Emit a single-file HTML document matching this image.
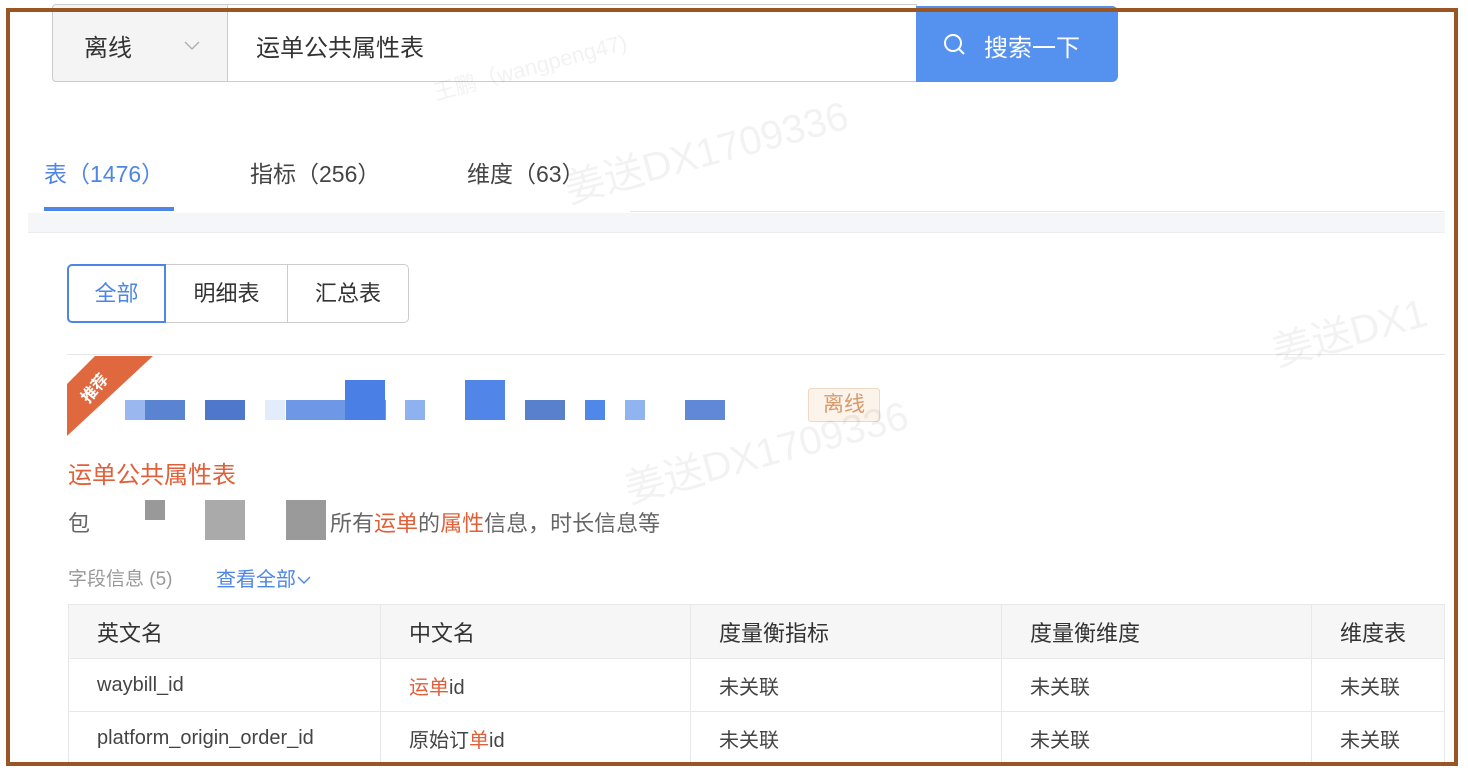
<!DOCTYPE html>
<html><head><meta charset="utf-8"><style>
*{box-sizing:border-box;margin:0;padding:0}
body{width:1468px;height:774px;background:#fff;position:relative;overflow:hidden;font-family:"Liberation Sans","Noto Sans CJK SC",sans-serif;color:#333}
.a{position:absolute}
.frame{position:absolute;left:6px;top:8px;width:1452px;height:758px;border:4px solid #9a5524;z-index:10;pointer-events:none}
.wm{position:absolute;color:rgba(0,0,0,0.05);transform:rotate(-15deg);white-space:nowrap;font-size:22px}
td,th{border:1px solid #e8e8e8;text-align:left;padding-left:28px;font-weight:normal}
</style></head><body>
<div class="frame"></div>
<div class="a" style="left:52px;top:4px;width:176px;height:78px;background:#f4f4f4;border:1px solid #ccc;border-radius:4px 0 0 4px"></div>
<div class="a" style="left:84px;top:28px;font-size:24px;color:#333">离线</div>
<svg class="a" style="left:183px;top:40px" width="18" height="12"><path d="M2 2 L9 9 L16 2" fill="none" stroke="#aaa" stroke-width="1.3"/></svg>
<div class="a" style="left:227px;top:4px;width:690px;height:78px;border:1px solid #ccc"></div>
<div class="a" style="left:256px;top:28px;font-size:24px;color:#333">运单公共属性表</div>
<div class="a" style="left:916px;top:6px;width:202px;height:76px;background:#5592ef;border-radius:0 6px 6px 0"></div>
<svg class="a" style="left:942px;top:32px" width="26" height="26"><circle cx="11" cy="11" r="8" fill="none" stroke="#fff" stroke-width="2"/><path d="M17 17 L22 22" stroke="#fff" stroke-width="2"/></svg>
<div class="a" style="left:984px;top:28px;font-size:24px;color:#fff">搜索一下</div>
<div class="a" style="left:44px;top:155px;font-size:23px;color:#4d86e8">表（1476）</div>
<div class="a" style="left:250px;top:155px;font-size:23px;color:#444">指标（256）</div>
<div class="a" style="left:467px;top:155px;font-size:23px;color:#444">维度（63）</div>
<div class="a" style="left:44px;top:207px;width:130px;height:4px;background:#4d86e8"></div>
<div class="a" style="left:630px;top:211px;width:815px;height:1px;background:#e6e6e6"></div>
<div class="a" style="left:28px;top:213px;width:1417px;height:20px;background:#f5f6f7;border-bottom:1px solid #eee"></div>
<div class="a" style="left:67px;top:264px;width:342px;height:59px;border:1px solid #ccc;border-radius:5px"></div>
<div class="a" style="left:287px;top:264px;width:1px;height:59px;background:#ccc"></div>
<div class="a" style="left:67px;top:264px;width:99px;height:59px;border:2px solid #4d86e8;border-radius:5px 0 0 5px;color:#4d86e8;font-size:22px;text-align:center;line-height:55px">全部</div>
<div class="a" style="left:166px;top:264px;width:121px;height:59px;font-size:22px;text-align:center;line-height:59px;color:#333">明细表</div>
<div class="a" style="left:287px;top:264px;width:122px;height:59px;font-size:22px;text-align:center;line-height:59px;color:#333">汇总表</div>
<div class="a" style="left:67px;top:354px;width:1378px;height:1px;background:#e6e6e6"></div>
<svg class="a" style="left:67px;top:356px" width="90" height="80"><path d="M0 28 L0 80 L86 0 L28 0 Z" fill="#e0683f"/><text x="14" y="44" fill="#fff" font-size="16" font-weight="bold" transform="rotate(-50 22 38)" font-family="Noto Sans CJK SC">推荐</text></svg>
<div class="a" style="left:125px;top:400px;width:30px;height:20px;background:#9ab8ef"></div>
<div class="a" style="left:145px;top:400px;width:40px;height:20px;background:#5a83d2"></div>
<div class="a" style="left:205px;top:400px;width:40px;height:20px;background:#4f78cc"></div>
<div class="a" style="left:265px;top:400px;width:20px;height:20px;background:#e3ecfb"></div>
<div class="a" style="left:286px;top:400px;width:100px;height:20px;background:#6e97e6"></div>
<div class="a" style="left:345px;top:380px;width:40px;height:40px;background:#4a7fe5"></div>
<div class="a" style="left:405px;top:400px;width:20px;height:20px;background:#8db2ef"></div>
<div class="a" style="left:465px;top:380px;width:40px;height:40px;background:#5285e8"></div>
<div class="a" style="left:525px;top:400px;width:40px;height:20px;background:#5880cc"></div>
<div class="a" style="left:585px;top:400px;width:20px;height:20px;background:#5088ea"></div>
<div class="a" style="left:625px;top:400px;width:20px;height:20px;background:#8fb4f0"></div>
<div class="a" style="left:685px;top:400px;width:40px;height:20px;background:#6088d6"></div>
<div class="a" style="left:808px;top:388px;width:72px;height:34px;background:#fcf3ea;border:1px solid #efd9c4;border-radius:3px;color:#d89a6a;font-size:21px;text-align:center;line-height:32px">离线</div>
<div class="a" style="left:68px;top:455px;font-size:24px;color:#e0603a">运单公共属性表</div>
<div class="a" style="left:68px;top:506px;font-size:22px;color:#666;white-space:nowrap">包<span style="display:inline-block;width:240px"></span>所有<span style="color:#e0603a">运单</span>的<span style="color:#e0603a">属性</span>信息，时长信息等</div>
<div class="a" style="left:145px;top:500px;width:20px;height:20px;background:#999"></div>
<div class="a" style="left:205px;top:500px;width:40px;height:40px;background:#aaa"></div>
<div class="a" style="left:286px;top:500px;width:40px;height:40px;background:#9a9a9a"></div>
<div class="a" style="left:68px;top:564px;font-size:19px;color:#999">字段信息 (5)</div>
<div class="a" style="left:216px;top:563px;font-size:20px;color:#4d86e8">查看全部<svg width="16" height="12"><path d="M2 3 L8 9 L14 3" fill="none" stroke="#4d86e8" stroke-width="1.4"/></svg></div>
<table class="a" style="left:68px;top:604px;width:1377px;border-collapse:collapse;font-size:20px;color:#444">
<tr style="height:54px;background:#f6f6f6;font-size:22px;color:#333"><th style="width:312px">英文名</th><th style="width:310px">中文名</th><th style="width:311px">度量衡指标</th><th style="width:310px">度量衡维度</th><th>维度表</th></tr>
<tr style="height:53px"><td>waybill_id</td><td><span style="color:#e0603a">运单</span>id</td><td>未关联</td><td>未关联</td><td>未关联</td></tr>
<tr style="height:53px"><td>platform_origin_order_id</td><td>原始订<span style="color:#e0603a">单</span>id</td><td>未关联</td><td>未关联</td><td>未关联</td></tr>
</table>
<div class="wm" style="left:560px;top:120px;font-size:40px">姜送DX1709336</div>
<div class="wm" style="left:430px;top:50px">王鹏（wangpeng47)</div>
<div class="wm" style="left:620px;top:420px;font-size:40px">姜送DX1709336</div>
<div class="wm" style="left:1270px;top:300px;font-size:40px">姜送DX1</div>
</body></html>
